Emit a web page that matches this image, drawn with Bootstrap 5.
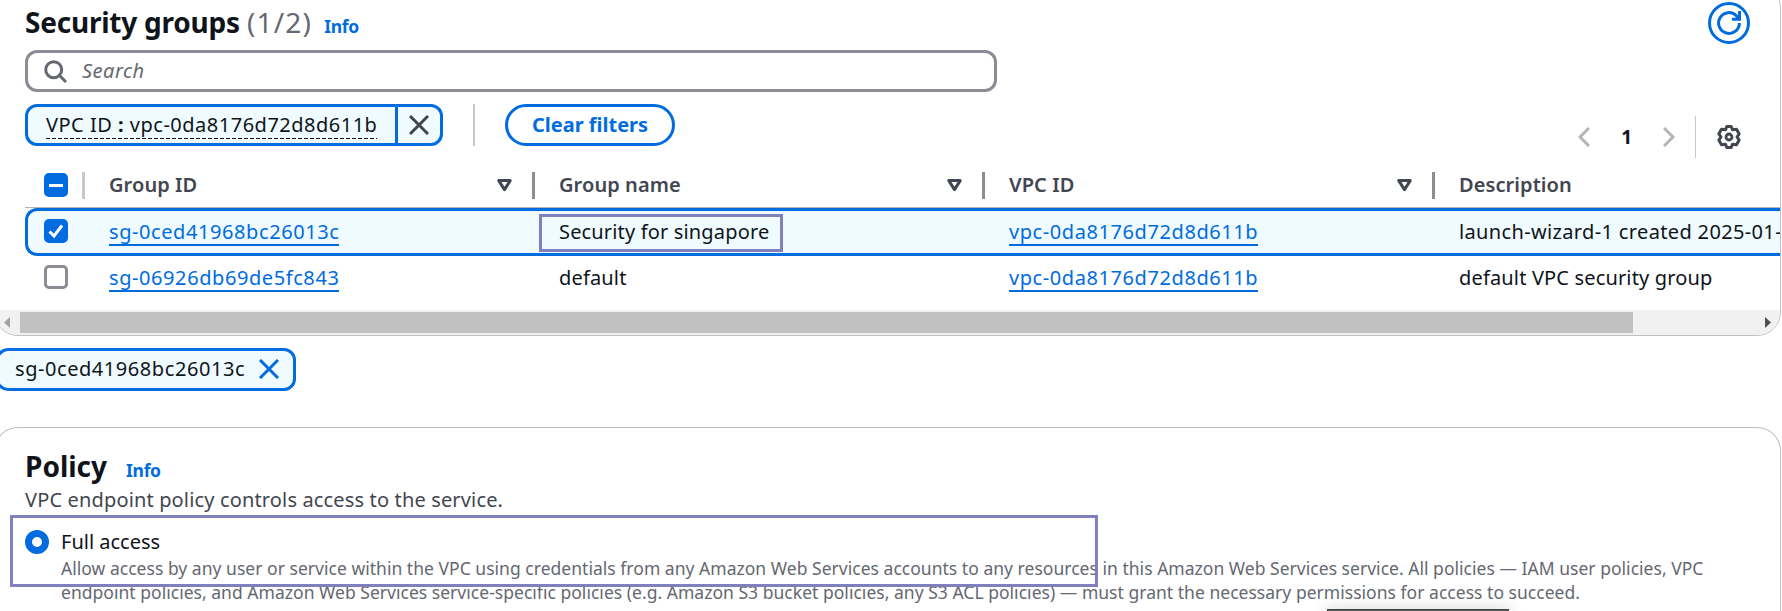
<!DOCTYPE html>
<html lang="en">
<head>
<meta charset="utf-8">
<meta name="viewport" content="width=device-width, initial-scale=1">
<title>Security groups</title>
<link href="https://cdn.jsdelivr.net/npm/bootstrap@5.3.0/dist/css/bootstrap.min.css" rel="stylesheet">
<style>
:root{--blue:#006ce0;--ink:#0f141a;--head:#424650;--muted:#656871;--line:#c6c6cd;--ctl:#8c8c94;--tint:#f0fbff;--mark:#8080bf}
body{font-family:"Noto Sans",sans-serif;font-size:20px;line-height:30px;color:var(--ink);background:#fff;overflow:hidden;height:611px}
svg{display:block;flex:none}
.panel{width:1787px;margin-left:-6px;border:1px solid #bfbfc5;border-radius:24px;background:#fff}
.panel-sg{height:352px;margin-top:-16px;padding-top:17px}
.inset{padding-left:30px;padding-right:30px}
h2{font-size:28px;line-height:42px;font-weight:700;margin:0}
.sg-title{letter-spacing:-.22px}
.sg-head{margin-top:-2px}
.count{font-weight:400;color:var(--muted);letter-spacing:1.2px}
.info{font-size:17.5px;font-weight:700;color:var(--blue);text-decoration:none;letter-spacing:-.3px}
.round-btn{width:42px;height:42px;border:3px solid var(--blue);border-radius:50%;background:#fff;color:var(--blue)}
.tools{height:108px;margin-top:6px}
.search{width:972px;height:42px;border:3px solid var(--ctl);border-radius:12px;padding-left:16px;gap:15px;color:var(--muted)}
.search em{letter-spacing:.5px}
.token{height:42px;border:3px solid var(--blue);border-radius:12px;background:var(--tint)}
.token-filter{width:418px}
.token-filter .txt{margin-left:18px;width:331px;height:27px;line-height:26px;margin-top:1px;letter-spacing:.5px;white-space:nowrap;background:repeating-linear-gradient(90deg,var(--ink) 0 4px,transparent 4px 6px) bottom/100% 1px no-repeat}
.token-filter .x{width:45px;height:36px;border-left:3px solid var(--blue);color:var(--head)}
.vline{width:2px;height:42px;background:var(--line)}
.btn-clear{width:170px;height:42px;border:3px solid var(--blue);border-radius:24px;color:var(--blue);font-weight:700}
.pager{height:42px;color:#b4b4bb}
.pager b{font-size:19px;color:var(--ink)}
.grid{margin-left:30px}
.grid-row{display:grid;grid-template-columns:60px 450px 450px 450px 1fr;align-items:center;white-space:nowrap;letter-spacing:.16px}
.grid-row>div{padding-left:24px}
.grid-row>div:first-child{padding-left:19px}
.grid-head{height:50px;border-bottom:1px solid #b4b4bb;font-weight:600;color:var(--head);letter-spacing:.08px;padding-top:5px}
.grid-head>div{display:flex;align-items:center;justify-content:space-between}
.sep{width:3px;height:27px;background:var(--ctl)}
.sep.light{background:var(--line)}
.tri{margin-left:auto;margin-right:20px}
.grid-sel{height:48px;border:3px solid var(--blue);border-right:0;border-radius:12px 0 0 12px;background:var(--tint);grid-template-columns:57px 450px 450px 450px 1fr}
.grid-sel>div:first-child{padding-left:16px;margin-top:-2px}
.grid-sel>div:last-child{overflow:hidden;letter-spacing:.35px}
.grid-plain{height:42px}
.grid-plain>div:nth-child(n+2){padding-top:1px}
.lnk{display:block;width:max-content;height:28px;color:var(--blue);text-decoration:none;line-height:27px;border-bottom:2px solid var(--blue);letter-spacing:.58px}
.grid-sel .lnk{margin-top:-1px}
.box{width:24px;height:24px;border-radius:5px;background:var(--blue)}
.box.off{background:#fff;border:3px solid var(--ctl)}
.hl{border:3px solid var(--mark);position:absolute;pointer-events:none}
.hl-name{left:-20px;top:-4px;width:244px;height:38px}
.scroller{height:26px;margin-top:12px;background:#f1f1f1;border-radius:0 0 23px 23px;padding:0 9px 2px}
.thumb{width:1613px;height:21px;background:#c1c1c1;margin-left:10px}
.token-sel{width:300px;height:43px;margin:12px 0 0 -4px;padding:0 0 2px 16px;letter-spacing:.56px;color:var(--ink)}
.panel-policy{margin-top:36px;height:184px;padding-top:17px;border-bottom:0;border-radius:24px 24px 0 0;overflow:hidden}
.sub{color:var(--head);letter-spacing:.15px;margin-top:-2px}
.radio{width:24px;height:24px;border:7px solid var(--blue);border-radius:50%;background:#fff}
.desc{font-size:17.5px;line-height:24px;color:var(--muted);letter-spacing:.026px;white-space:nowrap;margin:-1px 0 0 36px}
.hl-policy{left:-15px;top:-12px;width:1088px;height:72px}
.peek{position:absolute;left:1327px;top:609px;width:182px;height:2px;background:#55585c;border-top:1px solid #444;box-shadow:0 2px 14px 1px rgba(0,0,0,.35)}
</style>
</head>
<body class="position-relative">
<section class="panel panel-sg overflow-hidden">
  <header class="inset d-flex align-items-center justify-content-between">
    <div class="sg-head d-flex align-items-baseline">
      <h2 class="sg-title">Security groups</h2>
      <h2 class="count" style="margin-left:7px">(1/2)</h2>
      <a class="info" style="margin-left:12px" href="#">Info</a>
    </div>
    <button class="round-btn d-flex align-items-center justify-content-center p-0" aria-label="Refresh">
      <svg width="24" height="24" viewBox="0 0 24 24" fill="none" stroke="currentColor" stroke-width="3"><path d="M22.4 12A10.4 10.4 0 1 1 19.6 4.9L22.3 8M22.5 0V8.3H15"/></svg>
    </button>
  </header>
  <div class="inset tools d-flex justify-content-between">
    <div>
      <div class="search d-flex align-items-center">
        <svg width="23" height="23" viewBox="0 0 23 23" fill="none" stroke="currentColor" stroke-width="3"><circle cx="9.7" cy="9.7" r="8"/><path d="M15.3 15.3L22 22"/></svg>
        <em>Search</em>
      </div>
      <div class="d-flex align-items-center" style="margin-top:12px">
        <div class="token token-filter d-flex align-items-center">
          <span class="txt">VPC ID <b>:</b> vpc-0da8176d72d8d611b</span>
          <span class="x ms-auto d-flex align-items-center justify-content-center"><svg width="20" height="20" viewBox="0 0 20 20" stroke="currentColor" stroke-width="3"><path d="M1 1L19 19M19 1L1 19"/></svg></span>
        </div>
        <div class="vline" style="margin:0 30px"></div>
        <button class="btn-clear p-0 bg-white">Clear filters</button>
      </div>
    </div>
    <div class="pager d-flex align-items-center align-self-end">
      <svg width="12" height="20" viewBox="0 0 12 20" fill="none" stroke="currentColor" stroke-width="3"><path d="M11 1L2 10L11 19"/></svg>
      <b style="margin:0 31px 0 31px">1</b>
      <svg width="12" height="20" viewBox="0 0 12 20" fill="none" stroke="currentColor" stroke-width="3"><path d="M1 1L10 10L1 19"/></svg>
      <div class="vline" style="margin:0 21px 0 20px;width:1px"></div>
      <svg style="margin-right:9px" width="24" height="24" viewBox="0 0 24 24" fill="none" stroke="#424650" stroke-width="3" stroke-linejoin="round"><path d="M9.8 1.5H14.2L15.5 4.8L19.5 4.2L22.2 8.9L20 12L22.2 15.1L19.5 19.8L15.5 19.2L14.2 22.5H9.8L8.5 19.2L4.5 19.8L1.8 15.1L4 12L1.8 8.9L4.5 4.2L8.5 4.8Z"/><circle cx="12" cy="12" r="3" stroke-width="2.8"/></svg>
    </div>
  </div>
  <div class="grid-wrap">
    <div class="grid">
      <div class="grid-row grid-head">
        <div><span class="box d-flex align-items-center justify-content-center"><svg width="14" height="3"><path d="M0 0H14V3H0Z" fill="#fff"/></svg></span><span class="sep light"></span></div>
        <div>Group ID<svg class="tri" width="15" height="13" viewBox="0 0 15 13" fill="none" stroke="currentColor" stroke-width="3" stroke-linejoin="round"><path d="M1.8 1.6H13.2L7.5 10.6Z"/></svg><span class="sep"></span></div>
        <div>Group name<svg class="tri" width="15" height="13" viewBox="0 0 15 13" fill="none" stroke="currentColor" stroke-width="3" stroke-linejoin="round"><path d="M1.8 1.6H13.2L7.5 10.6Z"/></svg><span class="sep"></span></div>
        <div>VPC ID<svg class="tri" width="15" height="13" viewBox="0 0 15 13" fill="none" stroke="currentColor" stroke-width="3" stroke-linejoin="round"><path d="M1.8 1.6H13.2L7.5 10.6Z"/></svg><span class="sep"></span></div>
        <div>Description</div>
      </div>
      <div class="grid-row grid-sel">
        <div><span class="box d-block"><svg width="24" height="24" fill="none" stroke="#fff" stroke-width="3"><path d="M5.5 12.5L10 17L18 6.5"/></svg></span></div>
        <div><a class="lnk" href="#">sg-0ced41968bc26013c</a></div>
        <div><span class="position-relative">Security for singapore<i class="hl hl-name"></i></span></div>
        <div><a class="lnk" href="#">vpc-0da8176d72d8d611b</a></div>
        <div>launch-wizard-1 created 2025-01-</div>
      </div>
      <div class="grid-row grid-plain">
        <div><span class="box off d-block"></span></div>
        <div><a class="lnk" href="#">sg-06926db69de5fc843</a></div>
        <div>default</div>
        <div><a class="lnk" href="#">vpc-0da8176d72d8d611b</a></div>
        <div>default VPC security group</div>
      </div>
    </div>
    <div class="scroller d-flex align-items-center">
      <svg width="6" height="11"><path d="M6 0V11L0 5.5Z" fill="#a3a3a3"/></svg>
      <div class="thumb"></div>
      <svg class="ms-auto" width="6" height="11"><path d="M0 0V11L6 5.5Z" fill="#505050"/></svg>
    </div>
  </div>
</section>

<div class="token token-sel d-flex align-items-center">sg-0ced41968bc26013c
  <svg style="margin-left:14px" width="20" height="20" viewBox="0 0 20 20" stroke="#006ce0" stroke-width="3"><path d="M1 1L19 19M19 1L1 19"/></svg>
</div>

<section class="panel panel-policy inset">
  <div class="d-flex align-items-baseline">
    <h2>Policy</h2>
    <a class="info" style="margin-left:19px" href="#">Info</a>
  </div>
  <div class="sub">VPC endpoint policy controls access to the service.</div>
  <div class="position-relative" style="margin-top:12px">
    <div class="d-flex align-items-center" style="gap:12px"><span class="radio"></span>Full access</div>
    <div class="desc">Allow access by any user or service within the VPC using credentials from any Amazon Web Services accounts to any resources in this Amazon Web Services service. All policies — IAM user policies, VPC<br>endpoint policies, and Amazon Web Services service-specific policies (e.g. Amazon S3 bucket policies, any S3 ACL policies) — must grant the necessary permissions for access to succeed.</div>
    <i class="hl hl-policy"></i>
  </div>
</section>
<div class="peek"></div>
<script src="https://cdn.jsdelivr.net/npm/bootstrap@5.3.0/dist/js/bootstrap.bundle.min.js"></script>
</body>
</html>
